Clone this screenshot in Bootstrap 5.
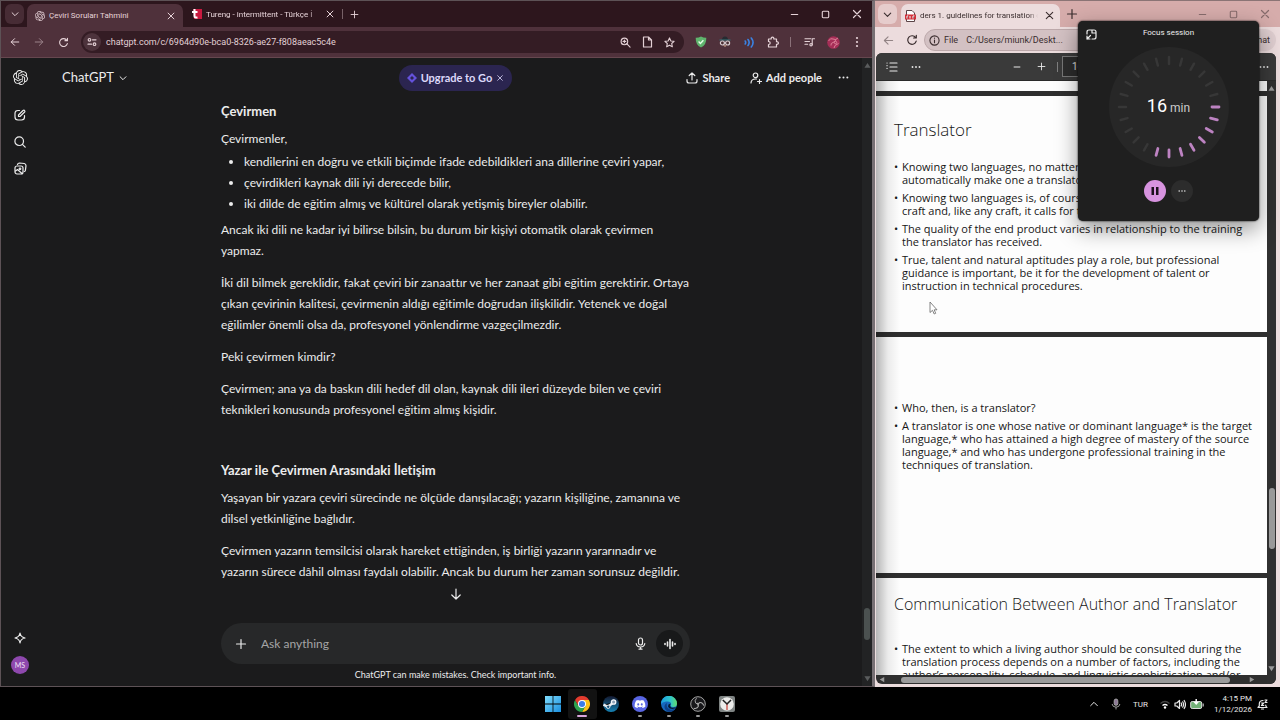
<!DOCTYPE html>
<html lang="tr" data-bs-theme="light">
<head>
<meta charset="utf-8">
<meta name="viewport" content="width=device-width, initial-scale=1">
<title>Desktop</title>
<link href="https://cdn.jsdelivr.net/npm/bootstrap@5.3.0/dist/css/bootstrap.min.css" rel="stylesheet">
<script src="https://cdn.jsdelivr.net/npm/bootstrap@5.3.0/dist/js/bootstrap.bundle.min.js"></script>
<style>
  body { font-family: Roboto, "Noto Sans", sans-serif; font-size: 12px; line-height: 21px; background: #000; }
  button, a.plain { background: none; border: 0; padding: 0; color: inherit; text-decoration: none; font: inherit; display: inline-flex; align-items: center; justify-content: center; flex: none; }
  svg { display: block; flex: none; }
  .ln { fill: none; stroke: currentColor; stroke-width: 1.2; stroke-linecap: round; stroke-linejoin: round; }
  .cell { width: 24px; height: 24px; }
  .cell-s { width: 22px; height: 22px; }
  .wincell { width: 31px; height: 24px; }
  .grow { flex: 1 1 0; min-width: 0; }
  .fade-end { white-space: nowrap; overflow: hidden; -webkit-mask-image: linear-gradient(90deg, #000 92%, transparent); mask-image: linear-gradient(90deg, #000 92%, transparent); }

  /* browser windows */
  .win-chat { flex: 0 0 68.36%; border: 1px solid #5d5256; border-right: 3px solid #777074; background: #1b1b1c; color: #ececec; position: relative; z-index: 1; }
  .win-pdf { background: #ecdcdd; border-top: 1px solid #8b7475; padding: 0 4px 3px 1px; color: #3a2d2e; }
  .tabstrip { height: 26px; font-size: 8px; }
  .win-chat .tabstrip { background: #2d161d; color: #e6d3d8; padding-left: 4px; }
  .win-pdf .tabstrip { background: #d6acab; margin: 0 -4px 0 -1px; padding-left: 3px; }
  .tabmenu { width: 19px; height: 20px; border-radius: 6px; }
  .win-chat .tabmenu { background: #472c35; }
  .win-pdf .tabmenu { background: #e6cccc; }
  .tab-on { border-radius: 7px 7px 0 0; height: 23px; align-self: flex-end; }
  .win-chat .tab-on { background: #4f313b; width: 156px; margin-left: 3px; }
  .win-pdf .tab-on { background: #ecdcdd; width: 159px; margin-left: 4px; }
  .tab-off { width: 159px; }
  .toolbar-a { height: 31px; background: #4f313b; color: #e6d3d8; border-bottom: 1px solid #66474f; padding: 0 3px 0 2px; }
  .omni-a { background: #341c24; border-radius: 11px; height: 22px; margin-left: 6px; margin-right: 5px; font-size: 9px; color: #e3d0d5; }
  .tune { width: 18px; height: 18px; border-radius: 50%; background: #4d333c; margin: 0 5px 0 2px; }
  .toolbar-b { height: 26px; }
  .omni-b { background: #d3c1c3; border: 1px solid #bda9ab; border-radius: 11px; height: 22px; font-size: 9px; }
  .chat-chip { background: #dfced0; border-radius: 11px; height: 22px; padding: 0 6px 0 10px; font-size: 9px; }
  .vr-line { width: 1px; height: 10px; background: currentColor; opacity: .4; }
  .vr-wide { margin: 0 6px 0 5px; }

  /* chat page */
  .chat-page { font-family: Lato, "Noto Sans", sans-serif; font-variant-ligatures: none; }
  .rail { width: 38px; padding: 6px 0 8px; }
  .rail button { width: 37px; height: 27px; }
  .rail .home { margin-bottom: 10px; }
  .me { width: 18px; height: 18px; border-radius: 50%; background: #8e48ad; color: #f2e4f8; font-size: 7px; line-height: 18px; }
  .chat-head { height: 39px; padding: 0 19px 0 23px; }
  .chat-head .brand { font-size: 13px; }
  .strong-sm { font-size: 11px; font-weight: 700; }
  .upgrade { background: #2b2550; color: #dcd8fa; border-radius: 13px; height: 26px; padding: 0 8px; gap: 4px; }
  .upgrade-wrap { left: 0; right: 0; }
  .thread { width: 100%; max-width: 469px; margin: 0 auto; }
  .thread p { margin: 0 0 11px; white-space: nowrap; }
  .thread h2 { font-size: 13px; line-height: 21px; font-weight: 700; margin: 0 0 6px; }
  .thread ul { margin: 2px 0 5px; padding-left: 23px; white-space: nowrap; }
  .thread .tight { margin-bottom: 2px; }
  .thread .sect { margin-top: 40px; }
  .composer { background: #272829; border-radius: 21px; height: 41px; padding: 0 7px 0 8px; }
  .composer input { background: none; border: 0; outline: 0; color: #fff; padding: 0; font-size: 12px; }
  .composer input::placeholder { color: #a5a5a6; opacity: 1; }
  .voice { width: 27px; height: 27px; border-radius: 50%; background: #18191a; }
  .note { font-size: 9px; line-height: 22px; }
  .down { bottom: 86px; left: 0; right: 0; }
  .track-a { top: 0; bottom: 0; right: 0; width: 10px; background: #222324; color: #5a5c5d; }
  .thumb-a { width: 6px; height: 32px; border-radius: 3px; background: #4b5150; top: 87.5%; left: 2px; }

  /* pdf viewer */
  .viewer { background: #2f2f2f; border-radius: 6px; overflow: hidden; }
  .pdfbar { height: 28px; background: #3a3a3a; color: #e8e8e8; border-bottom: 1px solid #2a2a2a; }
  .pagebox { width: 50px; height: 21px; border: 1px solid #777; background: #2c2c2c; color: #ddd; font-size: 10px; padding: 0 9px; }
  .pdfgap { width: 35%; }
  .pages { gap: 5px; overflow: hidden; }
  .pages::before { content: ""; position: absolute; inset: 0 auto 0 0; width: 24px; background: linear-gradient(90deg, rgba(0,0,0,.28), rgba(0,0,0,.07) 50%, transparent); }
  .sheet { background: #fdfdfd; height: 236px; flex: none; color: #161616; font-family: "Open Sans", sans-serif; font-size: 11px; line-height: 13px; padding: 0 18px; white-space: nowrap; }
  .sheet.cut { height: 10px; }
  .sheet h3 { font-size: 16px; line-height: 24px; font-weight: 300; height: 64px; margin: 0; padding-top: 14px; }
  .sheet h3.mid { font-size: 17px; padding-top: 22px; }
  .sheet ul { list-style: none; margin: 0; padding: 0 0 0 8px; }
  .sheet li { margin-bottom: 5px; position: relative; }
  .sheet li::before { content: "•"; position: absolute; left: -8px; }
  .sheet .blank { height: 64px; }
  .track-v { width: 9px; background: #303030; color: #999; }
  .thumb-v { width: 6px; height: 61px; border-radius: 3px; background: #999; top: 67.5%; left: 2px; }
  .track-h { height: 9px; color: #999; padding: 0 12px 0 3px; }
  .thumb-h { height: 6px; border-radius: 3px; background: #9b9b9b; margin: 0 19px 0 16px; }

  /* focus timer */
  .focus-card { top: 21px; right: 21px; width: 181px; height: 200px; background: #1f1f1f; border-radius: 5px; color: #eee; z-index: 5; box-shadow: 0 8px 22px rgba(0,0,0,.42), 0 0 2px #000; }
  .focus-card header { height: 26px; font-size: 8px; line-height: 24px; }
  .dial { width: 120px; height: 120px; }
  .dial .face { inset: 0; }
  .mins { font-size: 18px; line-height: 24px; color: #fff; }
  .unit { font-size: 12px; color: #ccc; margin-left: 3px; }
  .round { width: 22px; height: 22px; border-radius: 50%; }
  .round.pause { background: #d793df; }
  .round.more { background: #2c2c2c; }
  .acts { margin-top: 13px; gap: 5px; }

  /* taskbar */
  .taskbar { height: 33px; color: #e8e8e8; padding-top: 1px; font-size: 8px; line-height: 11px; }
  .taskbar .side { flex: 1 1 0; padding: 0 12px; }
  .app { width: 29px; height: 30px; position: relative; }
  .app::after { content: ""; position: absolute; bottom: 2px; width: 4px; height: 2px; border-radius: 1px; background: #999; }
  .app.none::after { display: none; }
  .app.live { background: #121212; border-radius: 3px; }
  .app.live::after { width: 10px; background: #d9a6dd; }
  .lang { margin: 0 12px 0 6px; }
  .stamp { margin: 0 5px 0 10px; }
  .pointer { top: 301px; left: 72.6%; z-index: 4; }
</style>
</head>
<body class="vh-100 d-flex flex-column overflow-hidden">

<svg width="0" height="0" class="position-absolute">
  <defs>
    <symbol id="gpt" viewBox="0 0 24 24"><path fill="currentColor" d="M22.2819 9.8211a5.9847 5.9847 0 0 0-.5157-4.9108 6.0462 6.0462 0 0 0-6.5098-2.9A6.0651 6.0651 0 0 0 4.9807 4.1818a5.9847 5.9847 0 0 0-3.9977 2.9 6.0462 6.0462 0 0 0 .7427 7.0966 5.98 5.98 0 0 0 .511 4.9107 6.051 6.051 0 0 0 6.5146 2.9001A5.9847 5.9847 0 0 0 13.2599 24a6.0557 6.0557 0 0 0 5.7718-4.2058 5.9894 5.9894 0 0 0 3.9977-2.9001 6.0557 6.0557 0 0 0-.7475-7.0729zm-9.022 12.6081a4.4755 4.4755 0 0 1-2.8764-1.0408l.1419-.0804 4.7783-2.7582a.7948.7948 0 0 0 .3927-.6813v-6.7369l2.02 1.1686a.071.071 0 0 1 .038.052v5.5826a4.504 4.504 0 0 1-4.4945 4.4944zm-9.6607-4.1254a4.4708 4.4708 0 0 1-.5346-3.0137l.142.0852 4.783 2.7582a.7712.7712 0 0 0 .7806 0l5.8428-3.3685v2.3324a.0804.0804 0 0 1-.0332.0615L9.74 19.9502a4.4992 4.4992 0 0 1-6.1408-1.6464zM2.3408 7.8956a4.485 4.485 0 0 1 2.3655-1.9728V11.6a.7664.7664 0 0 0 .3879.6765l5.8144 3.3543-2.0201 1.1685a.0757.0757 0 0 1-.071 0l-4.8303-2.7865A4.504 4.504 0 0 1 2.3408 7.872zm16.5963 3.8558L13.1038 8.364 15.1192 7.2a.0757.0757 0 0 1 .071 0l4.8303 2.7913a4.4944 4.4944 0 0 1-.6765 8.1042v-5.6772a.79.79 0 0 0-.407-.667zm2.0107-3.0231l-.142-.0852-4.7735-2.7818a.7759.7759 0 0 0-.7854 0L9.409 9.2297V6.8974a.0662.0662 0 0 1 .0284-.0615l4.8303-2.7866a4.4992 4.4992 0 0 1 6.6802 4.66zM8.3065 12.863l-2.02-1.1638a.0804.0804 0 0 1-.038-.0567V6.0742a4.4992 4.4992 0 0 1 7.3757-3.4537l-.142.0805L8.704 5.459a.7948.7948 0 0 0-.3927.6813zm1.0976-2.3654l2.602-1.4998 2.6069 1.4998v2.9994l-2.5974 1.4997-2.6067-1.4997Z"/></symbol>
    <symbol id="x" viewBox="0 0 12 12"><path class="ln" d="M2.5 2.5l7 7M9.5 2.5l-7 7"/></symbol>
    <symbol id="plus" viewBox="0 0 12 12"><path class="ln" d="M6 1.5v9M1.5 6h9"/></symbol>
    <symbol id="minus" viewBox="0 0 12 12"><path class="ln" d="M2.5 6h7"/></symbol>
    <symbol id="sq" viewBox="0 0 12 12"><rect class="ln" x="2.5" y="2.5" width="7" height="7" rx="1"/></symbol>
    <symbol id="chev" viewBox="0 0 12 12"><path class="ln" d="M2.5 4.5L6 8l3.500-3.500"/></symbol>
    <symbol id="back" viewBox="0 0 12 12"><path class="ln" d="M10.500 6h-9M5.500 2l-4 4 4 4"/></symbol>
    <symbol id="fwd" viewBox="0 0 12 12"><path class="ln" d="M1.500 6h9M6.500 2l4 4-4 4"/></symbol>
    <symbol id="reload" viewBox="0 0 12 12"><path class="ln" d="M10.200 7.200a4.300 4.300 0 1 1-.6-3.600M10.300 1.300v2.700H7.600"/></symbol>
    <symbol id="dots" viewBox="0 0 12 12"><g fill="currentColor"><circle cx="1.800" cy="6" r="1.100"/><circle cx="6" cy="6" r="1.100"/><circle cx="10.200" cy="6" r="1.100"/></g></symbol>
    <symbol id="up" viewBox="0 0 8 8"><path fill="currentColor" d="M4 1l3.500 5.500h-7z"/></symbol>
  </defs>
</svg>

<main class="d-flex grow position-relative">
  <!-- Chat window -->
  <section class="win-chat d-flex flex-column" aria-label="Chat window">
    <div class="tabstrip d-flex align-items-center">
      <button class="tabmenu" aria-label="Search tabs"><svg width="10" height="10"><use href="#chev"/></svg></button>
      <div class="tab-on d-flex align-items-center ps-1">
        <svg class="ms-1 me-1" width="10" height="10"><use href="#gpt"/></svg>
        <span class="grow text-nowrap">Çeviri Soruları Tahmini</span>
        <button class="cell" aria-label="Close tab"><svg width="10" height="10"><use href="#x"/></svg></button>
      </div>
      <div class="tab-off d-flex align-items-center ps-2">
        <svg class="me-1" width="11" height="12" viewBox="0 0 11 12"><path fill="#c9193f" d="M2 1h9v10H3z"/><path fill="none" stroke="#fff" stroke-width="2" d="M3.500 1v7q0 2 3 1.500M1 4h5.500"/></svg>
        <span class="grow fade-end">Tureng - intermittent - Türkçe İ</span>
        <button class="cell" aria-label="Close tab"><svg width="10" height="10"><use href="#x"/></svg></button>
      </div>
      <span class="vr-line"></span>
      <button class="cell-s" aria-label="New tab"><svg width="9" height="9"><use href="#plus"/></svg></button>
      <div class="ms-auto d-flex">
        <button class="wincell" aria-label="Minimize"><svg width="11" height="11"><use href="#minus"/></svg></button>
        <button class="wincell" aria-label="Maximize"><svg width="11" height="11"><use href="#sq"/></svg></button>
        <button class="wincell" aria-label="Close"><svg width="12" height="12"><use href="#x"/></svg></button>
      </div>
    </div>
    <div class="toolbar-a d-flex align-items-center">
      <button class="cell" aria-label="Back"><svg width="10" height="10"><use href="#back"/></svg></button>
      <button class="cell opacity-50" aria-label="Forward"><svg width="10" height="10"><use href="#fwd"/></svg></button>
      <button class="cell" aria-label="Reload"><svg width="11" height="11"><use href="#reload"/></svg></button>
      <div class="omni-a grow d-flex align-items-center">
        <button class="tune" aria-label="Site information"><svg width="10" height="10" viewBox="0 0 10 10"><g class="ln"><circle cx="2.500" cy="2.800" r="1.300"/><path d="M5.500 2.800h3.500M1 7.200h3.500"/><circle cx="7.500" cy="7.200" r="1.300"/></g></svg></button>
        <span class="grow text-nowrap">chatgpt.com/c/6964d90e-bca0-8326-ae27-f808aeac5c4e</span>
        <button class="cell-s" aria-label="Zoom"><svg width="11" height="11" viewBox="0 0 12 12"><g class="ln"><circle cx="4.800" cy="4.800" r="3.600"/><path d="M7.600 7.600L11 11M3.300 4.800h3M4.800 3.300v3"/></g></svg></button>
        <button class="cell-s" aria-label="Reader"><svg width="11" height="12" viewBox="0 0 11 12"><path class="ln" d="M1.500 1h5l3 3v7h-8zM6.500 1v3h3"/></svg></button>
        <button class="cell-s me-1" aria-label="Bookmark"><svg width="11" height="11" viewBox="0 0 12 12"><path class="ln" d="M6 1l1.500 3.300 3.500.4-2.600 2.400.7 3.600L6 8.900l-3.100 1.800.7-3.600L1 4.700l3.500-.4z"/></svg></button>
      </div>
      <button class="cell" aria-label="Ad blocker"><svg width="12" height="12" viewBox="0 0 12 12"><path fill="#5fb46d" d="M6 .5q2.500 1.300 5.300 1.200Q11.500 9 6 11.600.5 9 .7 1.700 3.500 1.800 6 .5z"/><path fill="none" stroke="#e6ffe9" stroke-width="1.400" d="M3.600 5.600l1.800 1.800 3-3.200"/></svg></button>
      <button class="cell" aria-label="Privacy"><svg width="12" height="12" viewBox="0 0 12 12"><path fill="#262b31" d="M3 4q0-3.500 3-3.500T9 4z"/><path stroke="#36777c" d="M.5 4h11"/><circle cx="3.400" cy="7" r="2" fill="#4a2c31" stroke="#d9cdd0" stroke-width="1.200"/><circle cx="8.600" cy="7" r="2" fill="#4a2c31" stroke="#d9cdd0" stroke-width="1.200"/><path fill="#c29b87" d="M4 9.300h4L6 11z"/></svg></button>
      <button class="cell" aria-label="Sound"><svg width="11" height="11" viewBox="0 0 11 11"><g fill="none" stroke="#3a83e4" stroke-width="1.600" stroke-linecap="round"><path d="M1.200 4q1 1.500 0 3M4 2.500q2.300 3 0 6M7.300 1q3.500 4.500 0 9"/></g></svg></button>
      <button class="cell" aria-label="Extensions"><svg width="12" height="12" viewBox="0 0 12 12"><path class="ln" d="M1.500 3h2.700q-.2-1.900 1.300-1.900T6.800 3h2.700v2.700q1.900-.2 1.900 1.300T9.500 8.300V11h-8V8.500q1.700 0 1.700-1.500T1.500 5.500z"/></svg></button>
      <span class="vr-line vr-wide"></span>
      <button class="cell" aria-label="Media"><svg width="11" height="10" viewBox="0 0 12 11"><g class="ln"><path d="M1 2h6.500M1 5h5M1 8h3M9 8.500V2h2.500"/><circle cx="7.700" cy="8.500" r="1.300"/></g></svg></button>
      <button class="cell" aria-label="Profile"><svg width="13" height="13" viewBox="0 0 13 13"><circle cx="6.500" cy="6.500" r="6.300" fill="#a62e57"/><g fill="none" stroke="#dc8098"><path d="M1.500 5q2-3.500 4.500-2t5-1M4 9.500Q3.500 7 6 6.500t3-3.500M7 12q0-3 4.500-4.500"/><circle cx="8.500" cy="6.500" r="1.200"/></g></svg></button>
      <button class="cell" aria-label="Menu"><svg width="4" height="12" viewBox="0 0 4 12"><g fill="currentColor"><circle cx="2" cy="2" r="1.100"/><circle cx="2" cy="6" r="1.100"/><circle cx="2" cy="10" r="1.100"/></g></svg></button>
    </div>

    <div class="chat-page d-flex grow position-relative">
      <nav class="rail d-flex flex-column align-items-center" aria-label="Sidebar">
        <button class="home" aria-label="Home"><svg width="15" height="15"><use href="#gpt"/></svg></button>
        <button aria-label="New chat"><svg width="12" height="12" viewBox="0 0 12 12"><path class="ln" d="M5.500 1.500H4Q1 1.500 1 4.500V8q0 3 3 3h3.500q3 0 3-3V6.500M4.500 7.500V6L9 1.500q1-.8 1.600 0t0 1.500L6 7.500z"/></svg></button>
        <button aria-label="Search chats"><svg width="12" height="12" viewBox="0 0 12 12"><g class="ln"><circle cx="5.200" cy="5.200" r="4.300"/><path d="M8.400 8.400L11.200 11.200"/></g></svg></button>
        <button aria-label="Library"><svg width="13" height="13" viewBox="0 0 13 13"><g class="ln"><rect x="1" y="4" width="8" height="8" rx="2"/><path d="M3.500 2.500Q4 1 5.500 1l4.700.5Q12 2 12 3.700l-.6 4.600q-.2 1-1 1.200M1.500 9l2-1.500L8 11.500"/><circle cx="6" cy="6.800" r=".8"/></g></svg></button>
        <button class="mt-auto" aria-label="Upgrade"><svg width="12" height="12" viewBox="0 0 12 12"><path class="ln" d="M6 1Q6.500 5 11 6 6.500 7 6 11 5.500 7 1 6 5.500 5 6 1z"/></svg></button>
        <button aria-label="Account"><span class="me">MS</span></button>
      </nav>
      <div class="grow d-flex flex-column position-relative">
        <header class="chat-head d-flex align-items-center">
          <button class="brand">ChatGPT <svg class="ms-1" width="10" height="10"><use href="#chev"/></svg></button>
          <div class="upgrade-wrap position-absolute d-flex justify-content-center">
            <button class="upgrade strong-sm"><svg width="10" height="10" viewBox="0 0 10 10"><path fill="#6552dc" d="M5 0l5 5-5 5-5-5z"/><path fill="#2b2550" d="M5 3l2 2-2 2-2-2z"/></svg>Upgrade to Go<svg width="8" height="8"><use href="#x"/></svg></button>
          </div>
          <button class="ms-auto strong-sm position-relative"><svg class="me-1" width="12" height="12" viewBox="0 0 12 12"><path class="ln" d="M6 8V1M3.200 3.500L6 1l2.800 2.500M1 7.500V9q0 2 2 2h6q2 0 2-2V7.500"/></svg>Share</button>
          <button class="strong-sm ms-3 me-3 position-relative"><svg class="ms-1 me-1" width="12" height="12" viewBox="0 0 12 12"><g class="ln"><circle cx="5.500" cy="3.300" r="2.300"/><path d="M1 11q.2-4 4.500-4h1M9.500 7.500v4M7.500 9.500h4"/></g></svg>Add people</button>
          <button aria-label="More" class="me-1"><svg width="11" height="11"><use href="#dots"/></svg></button>
        </header>
        <article class="grow pt-1 overflow-hidden">
          <div class="thread">
            <h2>Çevirmen</h2>
            <p class="tight">Çevirmenler,</p>
            <ul>
              <li>kendilerini en doğru ve etkili biçimde ifade edebildikleri ana dillerine çeviri yapar,</li>
              <li>çevirdikleri kaynak dili iyi derecede bilir,</li>
              <li>iki dilde de eğitim almış ve kültürel olarak yetişmiş bireyler olabilir.</li>
            </ul>
            <p>Ancak iki dili ne kadar iyi bilirse bilsin, bu durum bir kişiyi otomatik olarak çevirmen<br>yapmaz.</p>
            <p>İki dil bilmek gereklidir, fakat çeviri bir zanaattır ve her zanaat gibi eğitim gerektirir. Ortaya<br>çıkan çevirinin kalitesi, çevirmenin aldığı eğitimle doğrudan ilişkilidir. Yetenek ve doğal<br>eğilimler önemli olsa da, profesyonel yönlendirme vazgeçilmezdir.</p>
            <p>Peki çevirmen kimdir?</p>
            <p>Çevirmen; ana ya da baskın dili hedef dil olan, kaynak dili ileri düzeyde bilen ve çeviri<br>teknikleri konusunda profesyonel eğitim almış kişidir.</p>
            <h2 class="sect">Yazar ile Çevirmen Arasındaki İletişim</h2>
            <p>Yaşayan bir yazara çeviri sürecinde ne ölçüde danışılacağı; yazarın kişiliğine, zamanına ve<br>dilsel yetkinliğine bağlıdır.</p>
            <p>Çevirmen yazarın temsilcisi olarak hareket ettiğinden, iş birliği yazarın yararınadır ve<br>yazarın sürece dâhil olması faydalı olabilir. Ancak bu durum her zaman sorunsuz değildir.</p>
          </div>
        </article>
        <div class="down position-absolute d-flex justify-content-center"><button aria-label="Scroll to bottom"><svg width="12" height="12" viewBox="0 0 12 12"><path class="ln" d="M6 1v10M1.800 7L6 11l4.200-4"/></svg></button></div>
        <footer class="thread">
          <div class="composer d-flex align-items-center">
            <button class="cell me-2" aria-label="Add"><svg width="12" height="12"><use href="#plus"/></svg></button>
            <input class="grow" type="text" placeholder="Ask anything" aria-label="Ask anything">
            <button class="cell me-1" aria-label="Dictate"><svg width="11" height="13" viewBox="0 0 11 13"><g class="ln"><rect x="3.500" y="1" width="4" height="7" rx="2"/><path d="M1.200 6.500q.5 3.500 4.300 3.500t4.300-3.500M5.500 10v2M4 12.200h3"/></g></svg></button>
            <button class="voice" aria-label="Voice mode"><svg width="12" height="12" viewBox="0 0 12 12"><path fill="none" stroke="currentColor" stroke-linecap="round" stroke-width="1.600" d="M1 5.500v1M3.500 4v4M6 1.500v9M8.500 4v4M11 5.500v1"/></svg></button>
          </div>
          <div class="note text-center">ChatGPT can make mistakes. Check important info.</div>
        </footer>
      </div>
      <div class="track-a position-absolute d-flex flex-column justify-content-between align-items-center py-1" aria-hidden="true">
        <svg width="7" height="7"><use href="#up"/></svg><span class="thumb-a position-absolute"></span>
        <svg width="7" height="7" viewBox="0 0 8 8"><path fill="currentColor" d="M4 7L.5 1.500h7z"/></svg>
      </div>
    </div>
  </section>

  <!-- PDF window -->
  <section class="win-pdf grow d-flex flex-column" aria-label="PDF window">
    <div class="tabstrip d-flex align-items-center">
      <button class="tabmenu" aria-label="Tab actions"><svg width="11" height="11"><use href="#chev"/></svg></button>
      <div class="tab-on d-flex align-items-center ps-1">
        <svg class="me-1" width="11" height="12" viewBox="0 0 11 12"><path fill="#fff" stroke="#5b4447" d="M1.500.5h5.500l2.500 2.500v8.500h-8z"/><path fill="#d02f39" d="M0 4.500h11v5H0z"/><path stroke="#fff" d="M2 8.500V6h1.200M5 6v2.500M8 8.500V6h1.500"/></svg>
        <span class="grow fade-end">ders 1. guidelines for translation of</span>
        <button class="cell-s" aria-label="Close tab"><svg width="11" height="11"><use href="#x"/></svg></button>
      </div>
      <button class="cell" aria-label="New tab"><svg width="12" height="12"><use href="#plus"/></svg></button>
      <div class="ms-auto d-flex opacity-50">
        <button class="wincell" aria-label="Minimize"><svg width="11" height="11"><use href="#minus"/></svg></button>
        <button class="wincell" aria-label="Maximize"><svg width="11" height="11"><use href="#sq"/></svg></button>
        <button class="wincell" aria-label="Close"><svg width="12" height="12"><use href="#x"/></svg></button>
      </div>
    </div>
    <div class="toolbar-b d-flex align-items-center">
      <button class="cell opacity-50" aria-label="Back"><svg width="11" height="11"><use href="#back"/></svg></button>
      <button class="cell" aria-label="Reload"><svg width="12" height="12"><use href="#reload"/></svg></button>
      <div class="omni-b grow d-flex align-items-center ps-1 me-1">
        <svg width="11" height="11" viewBox="0 0 12 12"><g class="ln"><circle cx="6" cy="6" r="5"/><path d="M6 5.500v3M6 3.300v.2"/></g></svg>
        <span class="ms-1 me-2">File</span><span>C:/Users/miunk/Deskt...</span>
        <svg class="ms-3" width="11" height="12" viewBox="0 0 11 12"><path class="ln" d="M2 9V5q0-3.500 3.500-3.500T9 5v4zM1 9h9M4.500 11h2"/></svg>
      </div>
      <button class="chat-chip">Chat</button>
    </div>
    <div class="viewer grow d-flex flex-column">
      <div class="pdfbar d-flex align-items-center">
        <button class="cell ms-1" aria-label="Contents"><svg width="12" height="10" viewBox="0 0 12 10"><path class="ln" d="M1 1h.1M4 1h7M1 3.700h.1M4 5h7M1 6.400h.1M4 9h7"/></svg></button>
        <button class="cell" aria-label="More"><svg width="10" height="10"><use href="#dots"/></svg></button>
        <button class="cell ms-auto" aria-label="Zoom out"><svg width="10" height="10"><use href="#minus"/></svg></button>
        <button class="cell" aria-label="Zoom in"><svg width="9" height="9"><use href="#plus"/></svg></button>
        <span class="vr-line ms-1 me-1"></span>
        <input class="pagebox" type="text" value="16" aria-label="Page">
        <span class="pdfgap"></span>
        <button class="cell" aria-label="Settings"><svg width="10" height="10"><use href="#dots"/></svg></button>
      </div>
      <div class="grow d-flex overflow-hidden">
        <div class="grow d-flex flex-column">
          <div class="pages grow d-flex flex-column position-relative">
            <div class="sheet cut"></div>
            <div class="sheet">
              <h3 class="mid">Translator</h3>
              <ul>
                <li>Knowing two languages, no matter how well, does not<br>automatically make one a translator.</li>
                <li>Knowing two languages is, of course, a prerequisite, but a<br>craft and, like any craft, it calls for training.</li>
                <li>The quality of the end product varies in relationship to the training<br>the translator has received.</li>
                <li>True, talent and natural aptitudes play a role, but professional<br>guidance is important, be it for the development of talent or<br>instruction in technical procedures.</li>
              </ul>
            </div>
            <div class="sheet">
              <div class="blank"></div>
              <ul>
                <li>Who, then, is a translator?</li>
                <li>A translator is one whose native or dominant language* is the target<br>language,* who has attained a high degree of mastery of the source<br>language,* and who has undergone professional training in the<br>techniques of translation.</li>
              </ul>
            </div>
            <div class="sheet">
              <h3>Communication Between Author and Translator</h3>
              <ul>
                <li>The extent to which a living author should be consulted during the<br>translation process depends on a number of factors, including the<br>author’s personality, schedule, and linguistic sophistication and/or</li>
              </ul>
            </div>
          </div>
          <div class="track-h d-flex align-items-center" aria-hidden="true">
            <svg width="6" height="7" viewBox="0 0 8 8"><path fill="currentColor" d="M1 4L7 .5v7z"/></svg>
            <span class="thumb-h grow"></span>
            <svg width="6" height="7" viewBox="0 0 8 8"><path fill="currentColor" d="M7 4L1 .5v7z"/></svg>
          </div>
        </div>
        <div class="track-v position-relative d-flex flex-column justify-content-between align-items-center pt-1 pb-2" aria-hidden="true">
          <svg width="7" height="7"><use href="#up"/></svg><span class="thumb-v position-absolute"></span>
          <svg class="mb-1" width="7" height="7" viewBox="0 0 8 8"><path fill="currentColor" d="M4 7L.5 1.500h7z"/></svg>
        </div>
      </div>
    </div>
  </section>

  <!-- Focus timer -->
  <aside class="focus-card position-absolute d-flex flex-column align-items-center" aria-label="Focus session">
    <header class="w-100 text-center position-relative">Focus session
      <button class="position-absolute start-0 top-0 ms-2 mt-2" aria-label="Back to full view"><svg width="11" height="11" viewBox="0 0 11 11"><path class="ln" d="M1 5V3q0-2 2-2h5q2 0 2 2v5q0 2-2 2H6M6 1v3h4M1 7v3h3M1 10l3.500-3.500"/></svg></button>
    </header>
    <div class="dial position-relative d-flex align-items-center justify-content-center">
      <svg class="face position-absolute" width="120" height="120" viewBox="-60 -60 120 120">
        <defs><path id="tk" d="M0-43v-7"/></defs>
        <circle r="60" fill="#272727"/>
        <g stroke="#373737" stroke-width="2.500" stroke-linecap="round">
          <use href="#tk"/><use href="#tk" transform="rotate(15)"/><use href="#tk" transform="rotate(30)"/><use href="#tk" transform="rotate(45)"/><use href="#tk" transform="rotate(60)"/><use href="#tk" transform="rotate(75)"/>
          <use href="#tk" transform="rotate(210)"/><use href="#tk" transform="rotate(225)"/><use href="#tk" transform="rotate(240)"/><use href="#tk" transform="rotate(255)"/><use href="#tk" transform="rotate(270)"/><use href="#tk" transform="rotate(285)"/><use href="#tk" transform="rotate(300)"/><use href="#tk" transform="rotate(315)"/><use href="#tk" transform="rotate(330)"/><use href="#tk" transform="rotate(345)"/>
        </g>
        <g stroke="#bd83c2" stroke-width="2.800" stroke-linecap="round">
          <use href="#tk" transform="rotate(90)"/><use href="#tk" transform="rotate(105)"/><use href="#tk" transform="rotate(120)"/><use href="#tk" transform="rotate(135)"/><use href="#tk" transform="rotate(150)"/><use href="#tk" transform="rotate(165)"/><use href="#tk" transform="rotate(180)"/><use href="#tk" transform="rotate(195)"/>
        </g>
      </svg>
      <div class="mins position-relative">16<span class="unit">min</span></div>
    </div>
    <div class="acts d-flex">
      <button class="round pause" aria-label="Pause"><svg width="8" height="8" viewBox="0 0 8 8"><path fill="#1c101d" d="M.5 0h2.500v8H.5zM5 0h2.500v8H5z"/></svg></button>
      <button class="round more" aria-label="More"><svg width="8" height="8"><use href="#dots"/></svg></button>
    </div>
  </aside>
  <svg class="pointer position-absolute" width="9" height="14" viewBox="0 0 9 14"><path fill="#fff" stroke="#666" stroke-width=".8" d="M1 1v10.500l2.500-2.200 1.700 3.700 1.500-.7L5.200 8.800H8z"/></svg>
</main>

<footer class="taskbar d-flex align-items-center">
  <div class="side"></div>
  <div class="d-flex">
    <button class="app none" aria-label="Start"><svg width="16" height="16" viewBox="0 0 16 16"><defs><linearGradient id="w" x2="1" y2="1"><stop stop-color="#7fdcfb"/><stop offset="1" stop-color="#1a8fe0"/></linearGradient></defs><path fill="url(#w)" d="M0 0h7.600v7.600H0zM8.400 0H16v7.600H8.400zM0 8.400h7.600V16H0zM8.400 8.400H16V16H8.400z"/></svg></button>
    <button class="app live" aria-label="Chrome"><svg width="16" height="16" viewBox="0 0 48 48"><path fill="#fbc116" d="M24 12h20.800A24 24 0 0 1 24 48l10.400-18z"/><path fill="#2da44e" d="M3.200 12A24 24 0 0 0 24 48l10.400-18-20.800 0z"/><path fill="#e33b2e" d="M3.200 12l10.400 18L24 12h20.800A24 24 0 0 0 3.200 12z"/><circle cx="24" cy="24" r="12" fill="#fff"/><circle cx="24" cy="24" r="9.200" fill="#3a7ce8"/></svg></button>
    <button class="app none" aria-label="Steam"><svg width="16" height="16" viewBox="0 0 16 16"><defs><linearGradient id="s" x2="0" y2="1"><stop stop-color="#13182f"/><stop offset="1" stop-color="#1683b5"/></linearGradient></defs><circle cx="8" cy="8" r="8" fill="url(#s)"/><path stroke="#e8eef4" stroke-width="2.400" d="M.5 8.600L5 10.800l5.500-4.400"/><circle cx="5.200" cy="10.800" r="1.700" fill="#1c5277" stroke="#e8eef4" stroke-width=".9"/><circle cx="10.600" cy="6" r="2.200" fill="#8fa3b8" stroke="#f4f7fa" stroke-width="1.300"/></svg></button>
    <button class="app" aria-label="Discord"><svg width="16" height="16" viewBox="-6 -6 36 36"><circle cx="12" cy="12" r="18" fill="#5865e2"/><path fill="#fff" d="M20.317 4.370a19.800 19.800 0 0 0-4.885-1.515c-.3.400-.530.900-.687 1.286a18.300 18.300 0 0 0-5.487 0c-.160-.400-.400-.900-.618-1.250a19.700 19.700 0 0 0-4.963 1.506C.533 9.046-.319 13.580.1 18.058c2.100 1.560 4.070 2.480 6.024 3.085.5-.65.930-1.350 1.310-2.022-.690-.260-1.310-.560-1.914-.998l.442-.302c3.928 1.793 8.180 1.793 12.139 0l.450.302c-.6.400-1.230.740-1.920 1.019.4.750.820 1.400 1.310 2 1.990-.6 3.980-1.520 6.033-3.085.5-5.177-.838-9.674-3.580-13.689zM8.020 15.331c-1.183 0-2.157-1.086-2.157-2.419s.955-2.419 2.157-2.419 2.176 1.095 2.157 2.419c0 1.333-.956 2.419-2.157 2.419zm7.975 0c-1.183 0-2.157-1.086-2.157-2.419s.955-2.419 2.157-2.419 2.176 1.095 2.157 2.419c0 1.333-.946 2.419-2.157 2.419z"/></svg></button>
    <button class="app" aria-label="Edge"><svg width="16" height="16" viewBox="0 0 16 16"><defs><linearGradient id="e" x2="1"><stop stop-color="#1b9de2"/><stop offset=".6" stop-color="#30c6c8"/><stop offset="1" stop-color="#62dd6b"/></linearGradient></defs><circle cx="8" cy="8" r="8" fill="#1668bd"/><path fill="url(#e)" d="M0 8A8 8 0 0 1 16 7.500q0 3.500-3.700 3.500-3 0-2.600-1.600.9-1.600-.1-2.900Q8 5 5 5.500 1 6.300 0 8z"/><path fill="#0d3f87" d="M6 7q-1.500 4.500 3 6.500 2 .8 5-1Q11.500 16 8 16 3 14 3.500 10 4 8 6 7z"/><path fill="#071c33" d="M9.500 7.500Q8.500 10 10 11.200q2 1.300 5.200-.2-1.200 1.800-3.700 2Q8 13 7 10.500q-.2-2.300 2.500-3z"/></svg></button>
    <button class="app" aria-label="OBS"><svg width="16" height="16" viewBox="0 0 16 16"><circle cx="8" cy="8" r="7.300" fill="#17171a" stroke="#a3a3a3"/><g fill="none" stroke="#a8a8a8"><path id="ob" d="M6.500 2.200Q4 4.800 5.800 7.200q1.500 1.500 3.600.4"/><use href="#ob" transform="rotate(120 8 8)"/><use href="#ob" transform="rotate(240 8 8)"/></g></svg></button>
    <button class="app" aria-label="Clock"><svg width="16" height="16" viewBox="0 0 16 16"><rect width="16" height="16" rx="2" fill="#7f8483"/><circle cx="8" cy="8" r="6.800" fill="#ededeb"/><path stroke="#c94a43" stroke-width="1.300" d="M8 8v6"/><path fill="none" stroke="#222" stroke-width="1.600" d="M3.800 4L8 8l4-4"/></svg></button>
  </div>
  <div class="side d-flex justify-content-end align-items-center">
    <button class="cell-s" aria-label="Hidden icons"><svg width="10" height="10" viewBox="0 0 12 12"><path class="ln" d="M2 8l4-4 4 4"/></svg></button>
    <button class="cell-s" aria-label="Microphone"><svg width="10" height="12" viewBox="0 0 11 13"><rect x="3.500" y="1" width="4" height="7" rx="2" fill="#8d7896"/><g fill="none" stroke="#aaa"><rect x="3.500" y="1" width="4" height="7" rx="2"/><path d="M1.200 6.500q.5 3.500 4.300 3.500t4.300-3.500M5.500 10v2.500"/></g></svg></button>
    <button class="lang">TUR</button>
    <button class="gap-1" aria-label="Network, volume and battery">
      <svg width="10" height="9" viewBox="0 0 10 9"><g fill="none"><path stroke="#444" stroke-width="1.200" d="M.5 3.500Q5-.5 9.500 3.500"/><path stroke="#fff" stroke-width="1.300" d="M2.500 5.500Q5 3.500 7.500 5.500"/></g><circle cx="5" cy="7.500" r="1.200" fill="#fff"/></svg>
      <svg width="12" height="11" viewBox="0 0 12 11"><path class="ln" d="M1 4h1.800L5.500 1.500v8L2.800 7H1zM7.200 4q.8 1.500 0 3M8.700 2.800q1.700 2.700 0 5.400M10.200 1.500q2.500 4 0 8"/></svg>
      <svg width="14" height="11" viewBox="0 0 14 11"><rect x=".7" y="2.500" width="11" height="7" rx="1.500" fill="#73b178" stroke="#ddd"/><path stroke="#ddd" d="M13.200 4.500v3"/><path fill="#fff" d="M5.500 0h1.400v3h2L6.200 6 3.500 3h2z"/></svg>
    </button>
    <div class="stamp text-end">4:15 PM<br>1/12/2026</div>
    <button aria-label="Notifications"><svg width="11" height="11" viewBox="0 0 11 11"><path class="ln" d="M6 1.500Q2.300 1.500 2.300 5v2L1 8.500h9L8.800 7V6M4.500 10h2M4.500 4h2.200L4.500 6.500h2.300M8 1h2L8 3.500h2"/></svg></button>
  </div>
</footer>
</body>
</html>
